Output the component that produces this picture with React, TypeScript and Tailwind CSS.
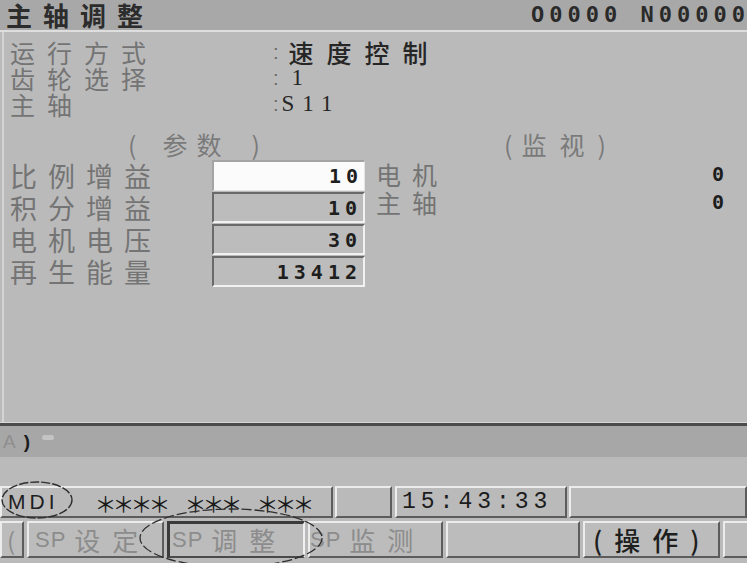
import React from 'react';

const CJK = "font-['Noto_Sans_CJK_SC',sans-serif]";
const MONO = "font-['DejaVu_Sans_Mono',monospace]";
const SANS = "font-['Liberation_Sans','Noto_Sans_CJK_SC',sans-serif]";
const SERIF = "font-['Liberation_Serif',serif]";

const topRows = [
  { label: '运行方式', value: '速度控制', kind: 'cjk' },
  { label: '齿轮选择', value: '1', kind: 'num' },
  { label: '主轴', value: 'S11', kind: 'num' },
];

const params = [
  { label: '比例增益', value: '10', active: true },
  { label: '积分增益', value: '10', active: false },
  { label: '电机电压', value: '30', active: false },
  { label: '再生能量', value: '13412', active: false },
];

const monitors = [
  { label: '电机', value: '0' },
  { label: '主轴', value: '0' },
];

const raised =
  'border-t-2 border-l-2 border-t-[#ececec] border-l-[#ececec] border-r-2 border-b-2 border-r-[#5c5c5c] border-b-[#5c5c5c]';

function SoftKey({ sp, cjk, width, selected, dark, pl }: { sp?: string; cjk?: string; width: string; selected?: boolean; dark?: boolean; pl?: string }) {
  return (
    <div
      className={`${width} h-[37px] shrink-0 flex items-center bg-[#bcbcbc] ${pl ?? ''} ${
        selected
          ? 'border-t-[3px] border-l-[3px] border-t-[#3a3a3a] border-l-[#3a3a3a] border-r-2 border-r-[#f0f0f0] border-b-2 border-b-[#4a4a4a]'
          : raised
      }`}
    >
      {sp && <span className={`${SANS} text-[22px] leading-[30px] tracking-[1px] text-[#8c8c8c] mr-[8px]`}>{sp}</span>}
      {cjk && (
        <span className={`${CJK} text-[26px] leading-[30px] tracking-[12px] ${dark ? 'text-[#1e1e1e] font-medium' : 'text-[#8c8c8c]'}`}>
          {cjk}
        </span>
      )}
    </div>
  );
}

export default function App() {
  return (
    <div className="relative w-[747px] h-[563px] overflow-hidden bg-[#bababa] flex flex-col select-none">
      {/* title bar */}
      <div className="h-[30px] shrink-0 bg-[#a8a8a8] flex items-center">
        <div className={`${CJK} w-[531px] shrink-0 pl-[6px] text-[26px] leading-[28px] tracking-[11px] font-bold text-[#2c2c2c]`}>
          主轴调整
        </div>
        <div className={`${MONO} shrink-0 whitespace-pre font-bold text-[22px] leading-[28px] tracking-[5px] text-[#2a2a2a]`}>
          O0000 N00000
        </div>
      </div>
      <div className="h-[2px] shrink-0 bg-[#dedede]" />

      {/* main panel */}
      <div className="h-[390px] shrink-0 ml-[2px] border-l-2 border-[#d4d4d4] pl-[6px] pt-[7px] flex flex-col">
        {topRows.map((r) => (
          <div key={r.label} className="h-[26px] flex items-center">
            <span className={`${CJK} w-[263px] shrink-0 text-[25px] leading-[26px] tracking-[12px] text-[#747474]`}>{r.label}</span>
            <span className={`${SANS} text-[20px] leading-[26px] text-[#6a6a6a]`}>:</span>
            {r.kind === 'cjk' ? (
              <span className={`${CJK} ml-[10px] text-[25px] leading-[26px] tracking-[13px] font-medium text-[#262626]`}>{r.value}</span>
            ) : (
              <span className={`${SERIF} ${r.value === '1' ? 'ml-[13px]' : 'ml-[3px]'} text-[23px] leading-[26px] tracking-[8px] text-[#262626]`}>
                {r.value}
              </span>
            )}
          </div>
        ))}

        {/* section headers */}
        <div className={`${CJK} mt-[13px] h-[28px] flex items-center text-[25px] leading-[28px] text-[#7a7a7a]`}>
          <div className="w-[494px] shrink-0 flex items-center">
            <span className="ml-[118px]">(</span>
            <span className="ml-[26px] tracking-[9px]">参数</span>
            <span className="ml-[21px]">)</span>
          </div>
          <span>(</span>
          <span className="ml-[9px] tracking-[13px]">监视</span>
          <span>)</span>
        </div>

        {/* parameters and monitor */}
        <div className="mt-[2px] flex">
          <div className="w-[355px] shrink-0 flex flex-col">
            {params.map((p) => (
              <div key={p.label} className="h-[32px] flex items-start">
                <span className={`${CJK} w-[202px] shrink-0 text-[27px] leading-[32px] tracking-[11px] text-[#747474]`}>{p.label}</span>
                <div
                  className={`w-[153px] h-[31px] flex items-center justify-end pr-[1px] ${
                    p.active
                      ? 'bg-[#fbfbfb] border-t-2 border-l-2 border-t-[#a4a4a4] border-l-[#a4a4a4] border-r border-b border-r-[#e4e4e4] border-b-[#e4e4e4]'
                      : 'bg-[#bcbcbc] border-t-2 border-l-2 border-t-[#6a6a6a] border-l-[#6a6a6a] border-r-2 border-b-2 border-r-[#f2f2f2] border-b-[#f2f2f2]'
                  }`}
                >
                  <span className={`${MONO} font-bold text-[20px] leading-[26px] tracking-[5px] text-[#1e1e1e]`}>{p.value}</span>
                </div>
              </div>
            ))}
          </div>
          <div className="ml-[11px] w-[348px] shrink-0 flex flex-col">
            {monitors.map((m) => (
              <div key={m.label} className="h-[28px] flex items-center justify-between">
                <span className={`${CJK} text-[25px] leading-[28px] tracking-[11px] text-[#747474]`}>{m.label}</span>
                <span className={`${MONO} font-bold text-[20px] leading-[28px] text-[#1e1e1e]`}>{m.value}</span>
              </div>
            ))}
          </div>
        </div>
      </div>

      {/* separator */}
      <div className="h-[1px] shrink-0 bg-[#d8d8d8]" />
      <div className="h-[3px] shrink-0 bg-[#4c4c4c]" />

      {/* command line */}
      <div className="h-[31px] shrink-0 bg-[#a7a7a7] flex items-center pl-[3px]">
        <span className={`${SANS} text-[19px] leading-[24px] text-[#8e8e8e]`}>A</span>
        <span className={`${SANS} ml-[8px] text-[19px] leading-[24px] font-bold text-[#1c1c1c]`}>)</span>
        <span className="ml-[12px] mb-[8px] w-[12px] h-[5px] rounded-full bg-[#c4c4c4]" />
      </div>
      <div className="h-[29px] shrink-0 bg-[#bababa]" />

      {/* status bar */}
      <div className="h-[32px] shrink-0 flex">
        <div className={`w-[333px] shrink-0 flex items-center pl-[6px] ${raised}`}>
          <span className={`${SANS} text-[21px] leading-[26px] tracking-[4px] text-[#1e1e1e]`}>MDI</span>
          <span className={`${CJK} ml-[36px] whitespace-pre text-[22px] leading-[26px] tracking-[-4px] text-[#1a1a1a]`}>
            ＊＊＊＊　＊＊＊　＊＊＊
          </span>
        </div>
        <div className={`ml-[2px] w-[57px] shrink-0 ${raised}`} />
        <div className={`ml-[3px] w-[172px] shrink-0 flex items-center pl-[5px] ${raised}`}>
          <span className={`${"font-['Liberation_Mono',monospace]"} text-[23px] leading-[26px] tracking-[5px] text-[#1c1c1c]`}>15:43:33</span>
        </div>
        <div className={`ml-[2px] flex-1 ${raised}`} />
      </div>

      {/* soft keys */}
      <div className="h-[45px] shrink-0 pt-[3px] flex gap-[3px]">
        <div className={`w-[24px] h-[37px] shrink-0 flex items-center pl-[5px] bg-[#bcbcbc] ${raised}`}>
          <span className={`${CJK} text-[24px] leading-[30px] text-[#8c8c8c]`}>(</span>
        </div>
        <SoftKey width="w-[137px]" sp="SP" cjk="设定" pl="pl-[6px]" />
        <SoftKey width="w-[138px]" sp="SP" cjk="调整" selected pl="pl-[2px]" />
        <SoftKey width="w-[135px]" sp="SP" cjk="监测" pl="pl-[0px]" />
        <SoftKey width="w-[134px]" />
        <SoftKey width="w-[137px]" cjk="(操作)" dark pl="pl-[8px]" />
        <SoftKey width="w-[40px]" />
      </div>

      {/* hand-drawn annotation ellipses */}
      <svg className="absolute inset-0 pointer-events-none" width="747" height="563" viewBox="0 0 747 563">
        <ellipse cx="37" cy="500" rx="35" ry="18" fill="none" stroke="#2e2e2e" strokeWidth="1.4" strokeDasharray="9 2" />
        <ellipse cx="231" cy="538" rx="91" ry="29" fill="none" stroke="#2e2e2e" strokeWidth="1.3" strokeDasharray="10 3" />
      </svg>
    </div>
  );
}
